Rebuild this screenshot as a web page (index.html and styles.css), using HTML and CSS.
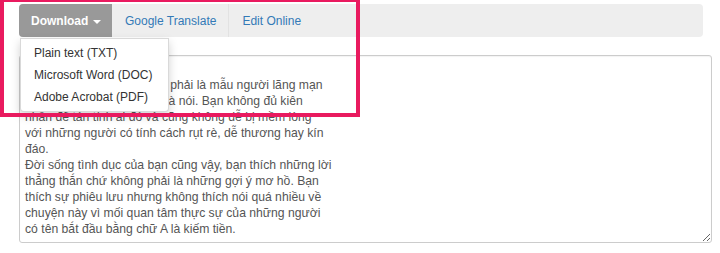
FILE: index.html
```html
<!DOCTYPE html>
<html lang="vi">
<head>
<meta charset="utf-8">
<title>Download</title>
<link rel="stylesheet" href="styles.css">
</head>
<body>
<div class="page">
  <nav class="navbar">
    <div class="dl-wrap">
      <a class="nav-item download">Download <span class="caret"></span></a>
      <ul class="dropdown">
        <li>Plain text (TXT)</li>
        <li>Microsoft Word (DOC)</li>
        <li>Adobe Acrobat (PDF)</li>
      </ul>
    </div>
    <a class="nav-item link sep">Google Translate</a>
    <a class="nav-item link">Edit Online</a>
  </nav>
  <textarea class="content">Trong tình yêu, bạn không phải là mẫu người lãng mạn
Bạn thích hành động hơn là nói. Bạn không đủ kiên
nhẫn để tán tỉnh ai đó và cũng không dễ bị mềm lòng
với những người có tính cách rụt rè, dễ thương hay kín
đáo.
Đời sống tình dục của bạn cũng vậy, bạn thích những lời
thẳng thắn chứ không phải là những gợi ý mơ hồ. Bạn
thích sự phiêu lưu nhưng không thích nói quá nhiều về
chuyện này vì mối quan tâm thực sự của những người
có tên bắt đầu bằng chữ A là kiếm tiền.</textarea>
  <div class="highlight"></div>
</div>
</body>
</html>
```

FILE: styles.css
```css
html, body {
  margin: 0;
  padding: 0;
  background: #fff;
}

.page {
  position: relative;
  padding: 4px 0 0 19px;
  font-family: "Liberation Sans", Arial, sans-serif;
  font-size: 12px;
}

.navbar {
  display: flex;
  align-items: stretch;
  width: 684px;
  height: 33px;
  background: #eee;
  border-radius: 4px;
}

.dl-wrap {
  position: relative;
  display: flex;
}

.nav-item {
  display: flex;
  align-items: center;
  text-decoration: none;
  cursor: pointer;
}

.download {
  width: 93px;
  box-sizing: border-box;
  padding-left: 12px;
  background: #999;
  color: #fff;
  font-weight: bold;
  border-radius: 4px 0 0 4px;
}

.caret {
  display: inline-block;
  width: 0;
  height: 0;
  margin-left: 5px;
  margin-top: 2px;
  border-top: 4px solid #fff;
  border-left: 4px solid transparent;
  border-right: 4px solid transparent;
}

.link {
  color: #337ab7;
  padding: 0 12px 0 13px;
}

.sep {
  border-right: 1px solid #e2e2e2;
}

.dropdown {
  position: absolute;
  left: 1px;
  top: 34px;
  width: 149px;
  box-sizing: border-box;
  margin: 0;
  padding: 3px 0;
  list-style: none;
  background: #fff;
  border: 1px solid rgba(0, 0, 0, 0.15);
  border-radius: 0 0 4px 4px;
  box-shadow: 0 4px 10px rgba(0, 0, 0, 0.18);
  z-index: 5;
}

.dropdown li {
  height: 22px;
  line-height: 22px;
  padding: 0 13px;
  color: #333;
  white-space: nowrap;
}

.content {
  display: block;
  box-sizing: border-box;
  width: 693px;
  height: 188px;
  margin-top: 18px;
  padding: 21px 4px 5px 5px;
  border: 1px solid #ccc;
  border-radius: 3px;
  font-family: "Liberation Sans", Arial, sans-serif;
  font-size: 12.2px;
  line-height: 16px;
  color: #555;
  background: #fff;
  box-shadow: inset 0 1px 1px rgba(0, 0, 0, 0.05);
  overflow: hidden;
  resize: both;
}

.highlight {
  position: absolute;
  left: 0;
  top: -2px;
  width: 360px;
  height: 119px;
  box-sizing: border-box;
  border: 4px solid #e91a5f;
  z-index: 10;
  pointer-events: none;
}
```
